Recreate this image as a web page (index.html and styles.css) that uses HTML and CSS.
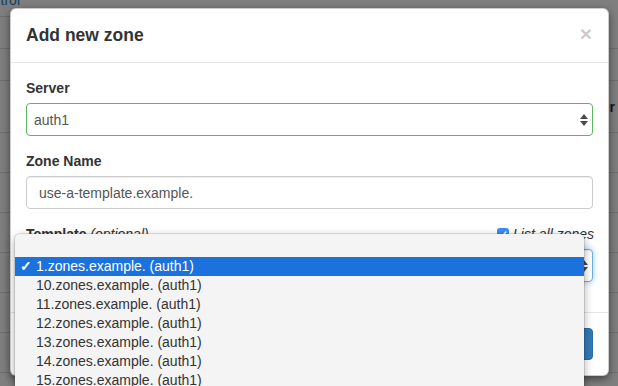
FILE: index.html
```html
<!DOCTYPE html>
<html lang="en">
<head>
<meta charset="utf-8">
<title>Add new zone</title>
<link rel="stylesheet" href="styles.css">
</head>
<body>
<div class="page">
  <div class="crumbs"><div class="crumb"><a href="#">Access control</a></div></div>
  <div class="band b1"></div>
  <div class="band b2"></div>
  <div class="band thead"><span>Server</span></div>
  <div class="band row"></div>
  <div class="band row"></div>
  <div class="band row"></div>
  <div class="band row"></div>
  <div class="band row"></div>
  <div class="band row"></div>
  <div class="band row"></div>
</div>
<div class="backdrop"></div>

<div class="modal">
  <div class="modal-header">
    <h4 class="modal-title">Add new zone</h4>
    <span class="close">&times;</span>
  </div>
  <div class="modal-body">
    <div class="form-group">
      <label class="lbl">Server</label>
      <div class="control select success">
        <span class="val">auth1</span>
        <svg class="arrows" width="8" height="12" viewBox="0 0 8 12"><path d="M0 5 L4 0 L8 5 Z M0 7 L4 12 L8 7 Z" fill="#4a4a4a"/></svg>
      </div>
    </div>
    <div class="form-group">
      <label class="lbl">Zone Name</label>
      <div class="control input"><span class="val">use-a-template.example.</span></div>
    </div>
    <div class="form-group">
      <div class="lbl-row">
        <label class="lbl">Template <em class="opt">(optional)</em></label>
        <label class="check">
          <span class="box"><svg width="10" height="10" viewBox="0 0 10 10"><path d="M2 5.2 L4.2 7.4 L8.2 2.6" fill="none" stroke="#fff" stroke-width="1.6"/></svg></span>
          <em>List all zones</em>
        </label>
      </div>
      <div class="control select focus">
        <span class="val"></span>
        <svg class="arrows" width="8" height="12" viewBox="0 0 8 12"><path d="M0 5 L4 0 L8 5 Z M0 7 L4 12 L8 7 Z" fill="#4a4a4a"/></svg>
      </div>
    </div>
  </div>
  <div class="modal-footer">
    <button class="btn btn-default">Close</button>
    <button class="btn btn-primary">Add zone</button>
  </div>
</div>

<div class="popup">
  <div class="opt-row"><span class="mark"></span><span></span></div>
  <div class="opt-row selected"><span class="mark">&#10003;</span><span>1.zones.example. (auth1)</span></div>
  <div class="opt-row"><span class="mark"></span><span>10.zones.example. (auth1)</span></div>
  <div class="opt-row"><span class="mark"></span><span>11.zones.example. (auth1)</span></div>
  <div class="opt-row"><span class="mark"></span><span>12.zones.example. (auth1)</span></div>
  <div class="opt-row"><span class="mark"></span><span>13.zones.example. (auth1)</span></div>
  <div class="opt-row"><span class="mark"></span><span>14.zones.example. (auth1)</span></div>
  <div class="opt-row"><span class="mark"></span><span>15.zones.example. (auth1)</span></div>
</div>
</body>
</html>
```

FILE: styles.css
```css
* { box-sizing: border-box; }
html, body { margin: 0; padding: 0; }
body {
  width: 618px;
  height: 386px;
  overflow: hidden;
  background: #fff;
  font-family: "Liberation Sans", Arial, sans-serif;
  color: #333;
  position: relative;
}

/* underlying page */
.page { width: 618px; }
.crumbs { height: 17px; }
.crumb {
  width: 40px;
  height: 17px;
  border-bottom: 1px solid #ddd;
  display: flex;
  justify-content: flex-end;
  overflow: hidden;
}
.crumb a {
  white-space: nowrap;
  color: #337ab7;
  font-size: 14px;
  line-height: 16px;
  margin-top: -8px;
  margin-right: 20px;
  text-decoration: none;
}
.band { border-bottom: 1px solid #ddd; }
.b1, .b2 { height: 32px; }
.thead {
  height: 52px;
  display: flex;
  justify-content: flex-end;
  align-items: center;
}
.thead span { font-weight: bold; font-size: 14px; color: #333; margin-right: 3px; }
.row { height: 40px; }

.backdrop {
  position: absolute;
  inset: 0;
  background: rgba(0, 0, 0, 0.5);
}

/* modal */
.modal {
  position: absolute;
  left: 10px;
  top: 8px;
  width: 599px;
  height: 368px;
  background: #fff;
  border: 1px solid rgba(0, 0, 0, 0.2);
  border-radius: 6px;
  box-shadow: 0 3px 9px rgba(0, 0, 0, 0.5);
  display: flex;
  flex-direction: column;
}
.modal-header {
  padding: 14px 15px;
  border-bottom: 1px solid #e5e5e5;
  display: flex;
  justify-content: space-between;
  align-items: center;
}
.modal-title {
  margin: 0;
  font-size: 17.5px;
  line-height: 25px;
  font-weight: bold;
  color: #333;
}
.close {
  font-size: 21px;
  font-weight: bold;
  line-height: 1;
  color: #000;
  opacity: 0.2;
  margin-right: 1px;
  margin-top: -4px;
}
.modal-body { padding: 15px 15px 0; flex: 1; }
.form-group { margin-bottom: 15px; }
.lbl {
  display: block;
  font-size: 14px;
  line-height: 20px;
  font-weight: bold;
  margin-bottom: 5px;
}
.opt { font-weight: normal; }
.lbl-row {
  display: flex;
  justify-content: space-between;
  align-items: flex-start;
}
.check {
  display: flex;
  align-items: center;
  gap: 4px;
  font-size: 14px;
  line-height: 20px;
  color: #333;
  margin-right: -1px;
}
.box {
  width: 12px;
  height: 12px;
  border-radius: 3px;
  background: #3a8ef6;
  display: flex;
  align-items: center;
  justify-content: center;
}
.control {
  height: 33px;
  border: 1px solid #ccc;
  border-radius: 4px;
  display: flex;
  align-items: center;
  justify-content: space-between;
  font-size: 14px;
  color: #555;
  background: #fff;
}
.select { padding: 0 4px 0 7px; }
.input { padding: 0 12px; box-shadow: inset 0 1px 1px rgba(0, 0, 0, 0.075); }
.success { border-color: #5cb85c; }
.focus {
  border-color: #66afe9;
  box-shadow: inset 0 1px 1px rgba(0, 0, 0, 0.075), 0 0 6px rgba(102, 175, 233, 0.6);
}
.modal-footer {
  border-top: 1px solid #e5e5e5;
  padding: 15px;
  display: flex;
  justify-content: flex-end;
  gap: 5px;
}
.btn {
  height: 32px;
  padding: 0 12px;
  font-family: inherit;
  font-size: 14px;
  border-radius: 4px;
  border: 1px solid #ccc;
  background: #fff;
  color: #333;
}
.btn-primary { background: #337ab7; border-color: #2e6da4; color: #fff; }

/* native popup menu */
.popup {
  position: absolute;
  left: 15px;
  top: 234px;
  width: 569px;
  height: 170px;
  background: #f4f4f4;
  border-radius: 5px;
  box-shadow: 0 0 0 1px rgba(0, 0, 0, 0.1), 0 3px 10px rgba(0, 0, 0, 0.35);
  padding-top: 4px;
  font-size: 14px;
  color: #333;
}
.opt-row {
  height: 19px;
  line-height: 19px;
  display: flex;
  white-space: nowrap;
}
.mark {
  width: 21px;
  padding-left: 5px;
  flex: none;
  font-weight: bold;
}
.selected { background: #1c72dc; color: #fff; }
```
